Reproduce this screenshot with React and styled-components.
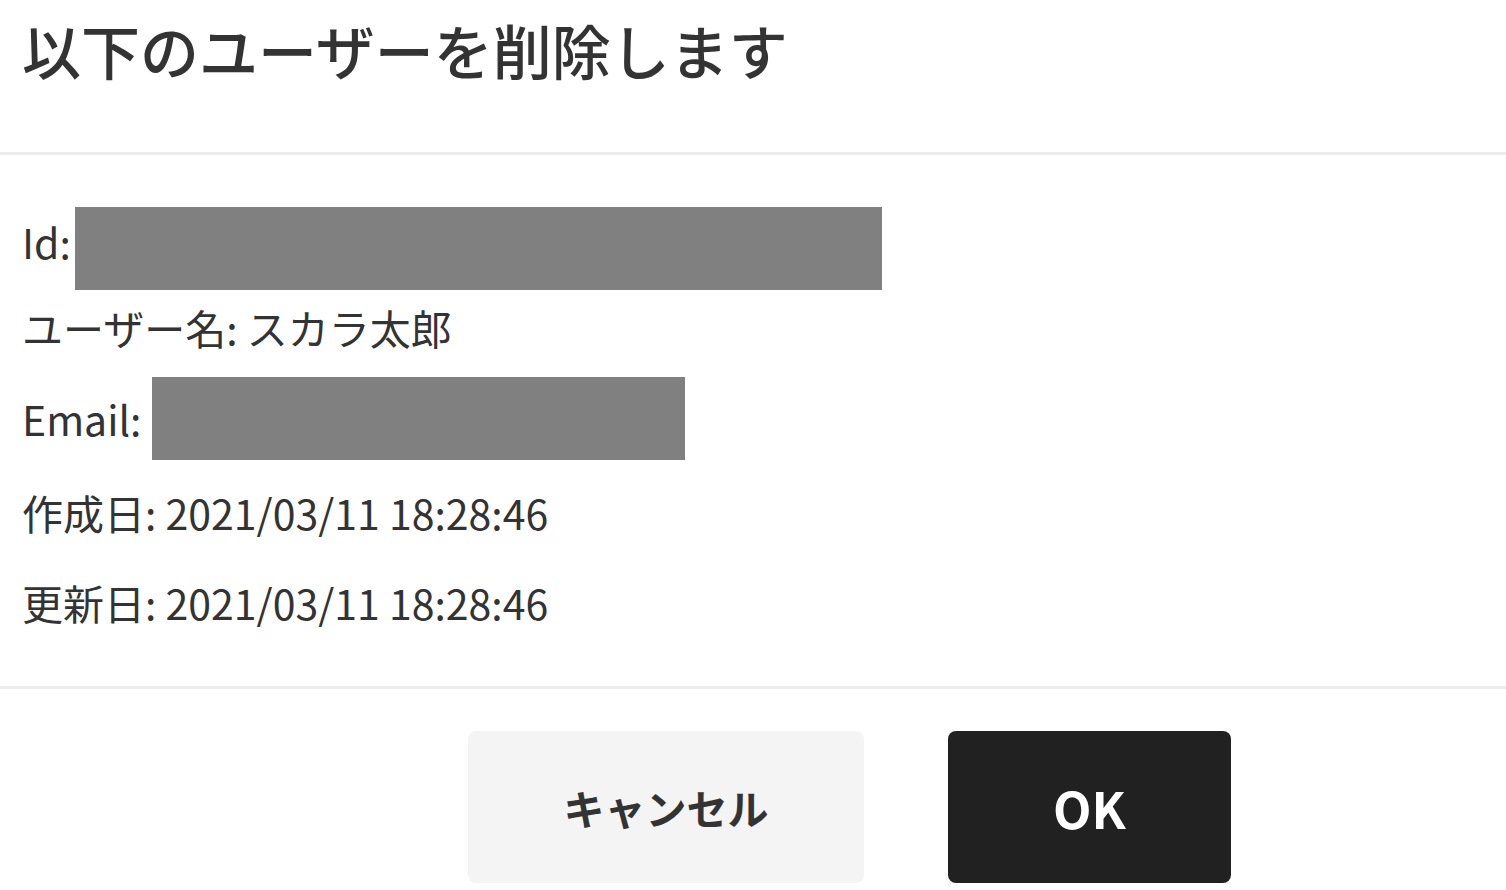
import React from 'react'
import styled, { createGlobalStyle } from 'styled-components'

const GlobalStyle = createGlobalStyle`
  html, body {
    margin: 0;
    padding: 0;
    background: #fff;
  }
  body {
    font-family: "Noto Sans CJK JP", "Noto Sans", sans-serif;
    color: #333;
  }
`

const Dialog = styled.div`
  width: 1506px;
  height: 890px;
  overflow: hidden;
  background: #fff;
  display: flex;
  flex-direction: column;
`

const Header = styled.div`
  height: 155px;
  padding: 0 22px;
  border-bottom: 3px solid #ececec;
  box-sizing: border-box;
`

const Title = styled.h1`
  margin: 0;
  padding-top: 10px;
  font-size: 59px;
  font-weight: 500;
  line-height: 80px;
  color: #333;
`

const Body = styled.div`
  padding: 52px 22px 0;
  height: 534px;
  box-sizing: border-box;
  border-bottom: 3px solid #ececec;
  display: flex;
  flex-direction: column;
`

const Row = styled.div`
  display: flex;
  align-items: center;
  gap: ${p => p.$gap || 8}px;
  height: ${p => p.$h || 54}px;
  margin-top: ${p => p.$mt || 0}px;
  font-size: 41px;
  line-height: 1;
  color: #333;
  white-space: nowrap;
`

const Label = styled.span`
  padding-bottom: ${p => p.$shift || 0}px;
`

const Redacted = styled.span`
  display: block;
  width: ${p => p.$w}px;
  height: 83px;
  background: #808080;
`

const Footer = styled.div`
  flex: 1;
  display: flex;
  justify-content: flex-start;
  align-items: flex-start;
  padding: 42px 0 0 468px;
  gap: 84px;
`

const Button = styled.button`
  height: 152px;
  width: ${p => p.$w}px;
  border: none;
  border-radius: 8px;
  font-family: "Noto Sans CJK JP", "Noto Sans", sans-serif;
  font-weight: 700;
  font-size: ${p => p.$fs}px;
  background: ${p => (p.$primary ? '#212121' : '#f4f4f4')};
  color: ${p => (p.$primary ? '#fff' : '#333')};
  cursor: pointer;
`

export default function App() {
  return (
    <>
      <GlobalStyle />
      <Dialog>
        <Header>
          <Title>以下のユーザーを削除します</Title>
        </Header>
        <Body>
          <Row $h={83} $gap={4}>
            <Label $shift={14}>Id:</Label>
            <Redacted $w={807} />
          </Row>
          <Row $mt={10}>ユーザー名: スカラ太郎</Row>
          <Row $h={83} $mt={23} $gap={10}>
            <Label>Email:</Label>
            <Redacted $w={533} />
          </Row>
          <Row $mt={25}>作成日: 2021/03/11 18:28:46</Row>
          <Row $mt={36}>更新日: 2021/03/11 18:28:46</Row>
        </Body>
        <Footer>
          <Button $w={396} $fs={41}>キャンセル</Button>
          <Button $w={283} $fs={50} $primary>OK</Button>
        </Footer>
      </Dialog>
    </>
  )
}
